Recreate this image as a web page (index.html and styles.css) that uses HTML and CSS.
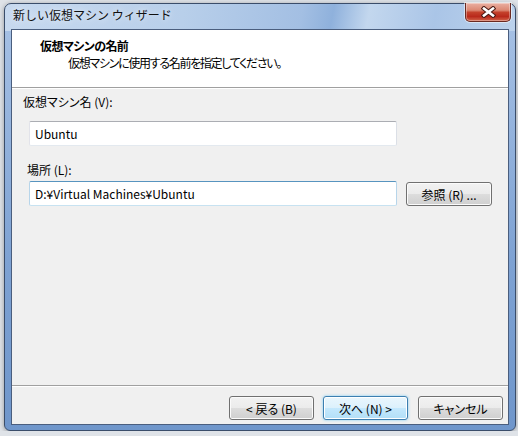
FILE: index.html
```html
<!DOCTYPE html>
<html lang="ja">

<head>
  <meta charset="UTF-8">
  <meta name="viewport" content="width=device-width, initial-scale=1.0">
  <title>新しい仮想マシン ウィザード</title>
  <link rel="stylesheet" href="styles.css">
</head>

<body>
  <div class="window">
    <div class="titlebar">
      <span class="title">新しい仮想マシン ウィザード</span>
      <button class="close-btn" type="button" aria-label="閉じる">
        <svg width="15" height="12" viewBox="0 0 15 12">
          <path d="M3 2.5 L12 9.5 M12 2.5 L3 9.5" stroke="#4a1a14" stroke-width="4.6" stroke-linecap="square" fill="none"/>
          <path d="M3 2.5 L12 9.5 M12 2.5 L3 9.5" stroke="#ffffff" stroke-width="2.6" stroke-linecap="square" fill="none"/>
        </svg>
      </button>
    </div>

    <div class="client">
      <div class="wizard-header">
        <h1>仮想マシンの名前</h1>
        <p>仮想マシンに使用する名前を指定してください。</p>
      </div>

      <div class="wizard-body">
        <label class="field-label" for="vmName">仮想マシン名 (V):</label>
        <input class="textbox" id="vmName" type="text" value="Ubuntu">

        <label class="field-label location" for="vmPath">場所 (L):</label>
        <div class="path-row">
          <input class="textbox hover" id="vmPath" type="text" value="D:¥Virtual Machines¥Ubuntu">
          <button class="btn browse" type="button">参照 (R) ...</button>
        </div>
      </div>

      <div class="wizard-footer">
        <button class="btn" type="button">&lt; 戻る (B)</button>
        <button class="btn default" type="button">次へ (N) &gt;</button>
        <button class="btn cancel" type="button">キャンセル</button>
      </div>
    </div>
  </div>
</body>

</html>
```

FILE: styles.css
```css
body {
  margin: 0;
  padding: 3px 0 0 4px;
  background-color: #dfe3e8;
  font-family: "Noto Sans CJK JP", sans-serif;
  font-size: 12px;
  font-feature-settings: "palt";
  color: #000;
}

.window {
  box-sizing: border-box;
  width: 512px;
  height: 428px;
  display: flex;
  flex-direction: column;
  padding: 0 6px 5px 6px;
  border: 1px solid #3a4d6a;
  border-radius: 7px 7px 6px 6px;
  background:
    linear-gradient(100deg, #c7d9ef 0%, #b8cfea 35%, #a3bfe3 58%, #8fb1dc 64%, #c3d7ee 71%, #aac5e7 84%, #bcd2ec 100%) top / 100% 27px no-repeat,
    linear-gradient(#a9c3e6, #7ea2d3 60%, #6f96cb);
  box-shadow: 0 1px 5px rgba(0, 0, 0, 0.35);
}

.titlebar {
  height: 25px;
  display: flex;
  align-items: flex-start;
  padding: 3px 0 0 2px;
  box-sizing: border-box;
}

.title {
  line-height: 16px;
  color: #101010;
  font-feature-settings: normal;
  text-shadow: 0 0 6px rgba(255, 255, 255, 0.9);
}

.close-btn {
  margin: -4px -2px 0 auto;
  width: 46px;
  height: 19px;
  padding: 0;
  display: flex;
  align-items: center;
  justify-content: center;
  border: 1px solid #6b2a22;
  border-top: none;
  border-radius: 0 0 5px 5px;
  background: linear-gradient(#eab0a2 0%, #dc8873 40%, #c4412b 52%, #b9291b 75%, #d2654a 100%);
  box-shadow: inset 0 0 0 1px rgba(255, 255, 255, 0.35), 0 0 0 1px rgba(255, 255, 255, 0.5);
}

.client {
  flex: 1;
  display: flex;
  flex-direction: column;
  border: 1px solid #4a5e7e;
  background-color: #f0f0f0;
}

.wizard-header {
  height: 58px;
  box-sizing: border-box;
  padding-top: 8px;
  background-color: #fff;
  border-bottom: 1px solid #a0a0a0;
}

.wizard-header h1 {
  margin: 0 0 0 28px;
  font-size: 12px;
  line-height: 16px;
  font-weight: bold;
  letter-spacing: -0.6px;
}

.wizard-header p {
  margin: 1px 0 0 56px;
  line-height: 16px;
  letter-spacing: -1.3px;
}

.wizard-body {
  flex: 1;
  display: flex;
  flex-direction: column;
  align-items: flex-start;
  padding-top: 5px;
  border-top: 1px solid #fff;
  border-bottom: 1px solid #a0a0a0;
}

.field-label {
  margin-left: 11px;
  line-height: 16px;
}

.field-label.location {
  margin: 16px 0 3px 15px;
}

.textbox {
  box-sizing: border-box;
  width: 368px;
  height: 25px;
  margin: 11px 0 0 17px;
  padding: 0 5px;
  border: 1px solid;
  border-color: #abadb3 #dbdfe6 #e3e9ef #e2e3ea;
  border-radius: 2px;
  background-color: #fff;
  font-family: "Noto Sans CJK JP", sans-serif;
  font-size: 12px;
  color: #000;
  outline: none;
}

.textbox.hover {
  margin-top: 0;
  border-color: #5794bf #b7d5ea #c7e2f1 #b7d5ea;
}

.path-row {
  display: flex;
  align-items: flex-start;
}

.btn {
  box-sizing: border-box;
  width: 85px;
  height: 24px;
  padding: 0;
  border: 1px solid #707070;
  border-radius: 3px;
  background: linear-gradient(#f2f2f2 0%, #ebebeb 50%, #dddddd 50%, #cfcfcf 100%);
  box-shadow: inset 0 0 0 1px #fbfbfb;
  font-family: "Noto Sans CJK JP", sans-serif;
  font-size: 12px;
  font-feature-settings: "palt";
  color: #000;
}

.btn.browse {
  width: 86px;
  margin: 1px 0 0 9px;
}

.btn.default {
  border-color: #3c7fb1;
  background: linear-gradient(#eaf6fd 0%, #dcf1fc 50%, #c4e8fd 50%, #b2dff7 100%);
  box-shadow: inset 0 0 0 1px #ffffff, 0 0 3px #7ecbf2;
}

.wizard-footer {
  height: 38px;
  box-sizing: border-box;
  display: flex;
  justify-content: flex-end;
  align-items: flex-start;
  gap: 9px;
  padding: 9px 5px 0 0;
  border-top: 1px solid #fff;
}

.btn.cancel {
  margin-left: 1px;
}
```
